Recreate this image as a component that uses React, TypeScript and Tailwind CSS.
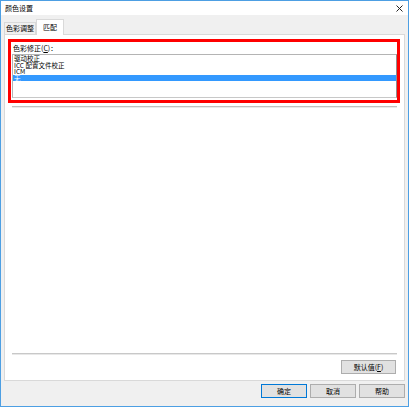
import React from "react";

const font = { fontFamily: '"Noto Sans CJK SC", "Noto Sans", sans-serif' };

function Btn({ label, def }: { label: string; def?: boolean }) {
  return (
    <div
      className={`w-[46px] h-[14px] flex items-center justify-center text-[7px] leading-none text-black bg-[#e1e1e1] border ${
        def ? "border-[#0078d7]" : "border-[#adadad]"
      }`}
    >
      {label}
    </div>
  );
}

export default function App() {
  const items = ["驱动校正", "ICC 配置文件校正", "ICM", "无"];
  return (
    <div
      className="w-[409px] h-[407px] border border-[#4d9fe3] bg-[#f0f0f0] flex flex-col text-black"
      style={font}
    >
      {/* title bar */}
      <div className="h-[14px] bg-white flex items-center justify-between pl-[4px] pr-[5px]">
        <span className="text-[7px] leading-none">颜色设置</span>
        <svg width="7" height="7" viewBox="0 0 7 7">
          <path d="M0.5 0.5 L6.5 6.5 M6.5 0.5 L0.5 6.5" stroke="#222" strokeWidth="1" />
        </svg>
      </div>

      {/* tabs */}
      <div className="h-[19px] flex items-end pl-[3px] relative z-10">
        <div className="h-[12px] w-[32px] border border-b-0 border-[#d9d9d9] bg-[#f0f0f0] flex items-center justify-center text-[7px] leading-none">
          色彩调整
        </div>
        <div className="h-[16px] w-[28px] -mb-[1px] border border-b-0 border-[#d9d9d9] bg-white flex items-center justify-center text-[7px] leading-none">
          匹配
        </div>
      </div>

      {/* panel */}
      <div className="ml-[3px] w-[401px] h-[347px] bg-white border border-[#d9d9d9] flex flex-col">
        <div className="ml-[3px] mt-[4px] w-[392px] h-[64px] border-[3px] border-[#ff0000] flex flex-col">
          <div className="h-[12px] pl-[2px] flex items-center text-[7px] leading-none">
            色彩修正(<span className="underline">C</span>)：
          </div>
          <div className="ml-[1px] w-[385px] h-[44px] border border-[#b4b4b4] border-r-[#8f8f8f] border-b-[#c8c8c8] bg-white flex flex-col">
            {items.map((t, i) => (
              <div
                key={t}
                className={`h-[6.5px] pl-[1px] flex items-center text-[6.5px] leading-none whitespace-nowrap ${
                  i === 3 ? "bg-[#3399ff] text-white" : ""
                }`}
              >
                {t}
              </div>
            ))}
          </div>
        </div>
        <div className="ml-[7px] mt-[3px] w-[385px] h-[2px] border-t border-[#c0c0c0] border-b border-b-[#eaeaea]" />
        <div className="flex-1" />
        <div className="ml-[7px] w-[385px] h-[2px] border-t border-[#c8c8c8] border-b border-b-[#e8e8e8]" />
        <div className="flex justify-end pr-[8px] mt-[5px]">
          <div className="w-[55px] h-[14px] flex items-center justify-center text-[7px] leading-none bg-[#e1e1e1] border border-[#adadad]">
            默认值(<span className="underline">F</span>)
          </div>
        </div>
        <div className="h-[6px]" />
      </div>

      {/* buttons */}
      <div className="flex justify-end gap-[3px] pr-[3px] mt-[3px]">
        <Btn label="确定" def />
        <Btn label="取消" />
        <Btn label="帮助" />
      </div>
    </div>
  );
}
